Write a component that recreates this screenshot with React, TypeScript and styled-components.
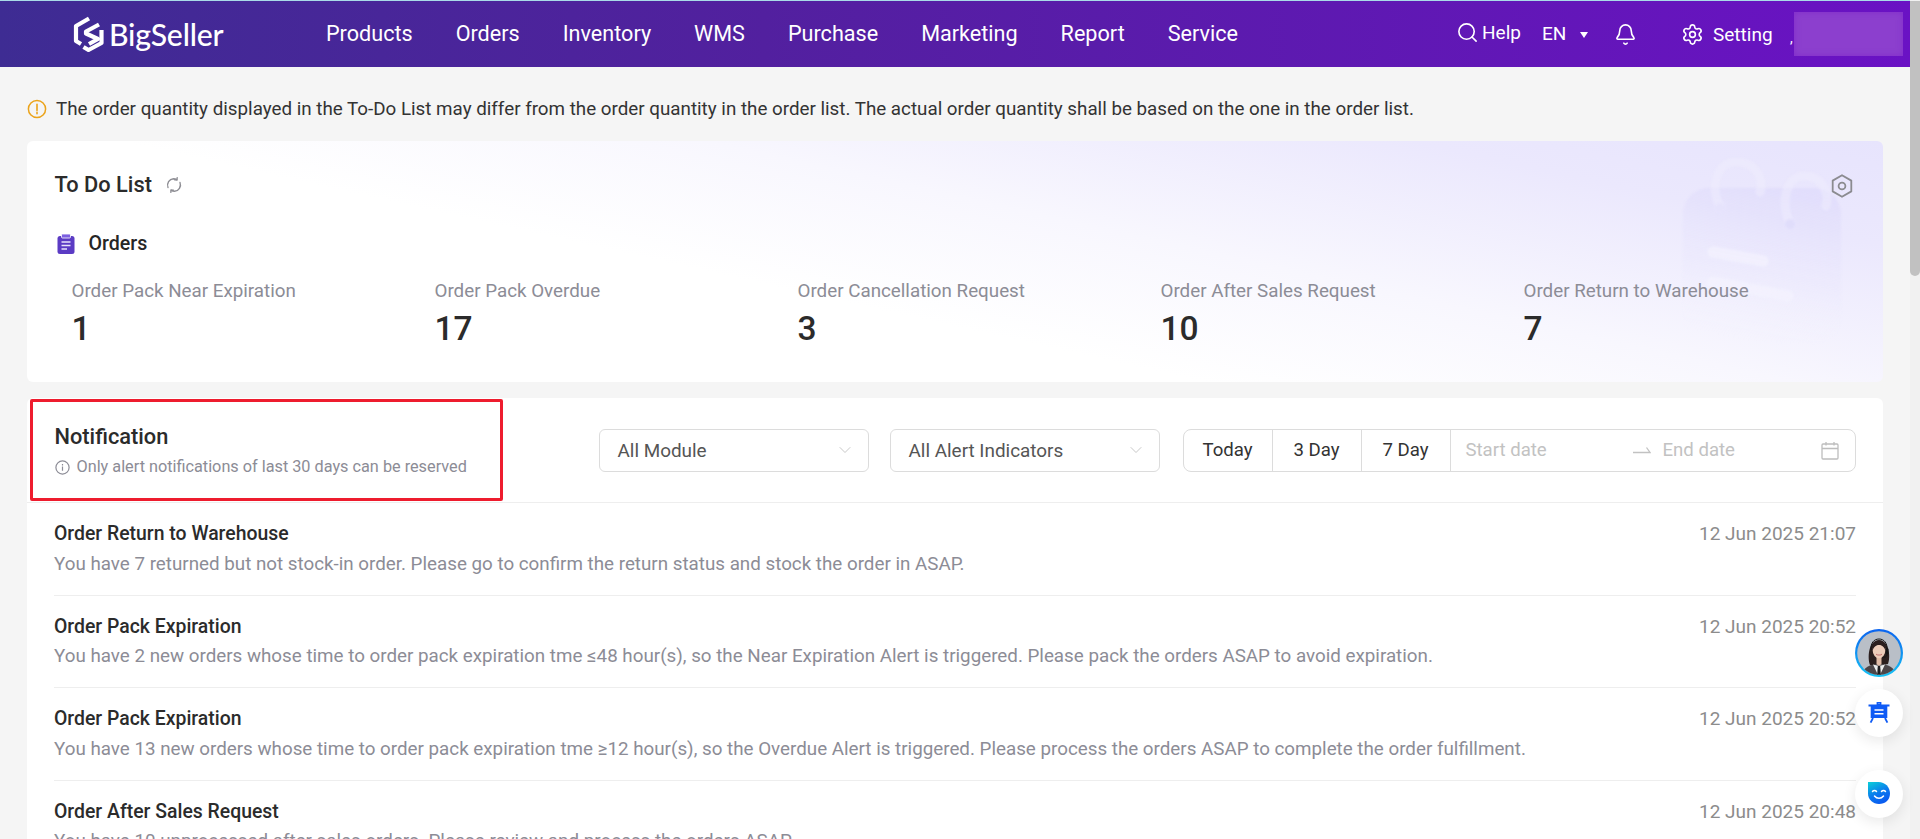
import React from "react";
import styled, { createGlobalStyle } from "styled-components";
import { Bell, ChevronDown, Search, Settings } from "lucide-react";

const Global = createGlobalStyle`
  html, body { margin: 0; padding: 0; background: #f5f5f5; }
  body { font-family: Roboto, "Liberation Sans", sans-serif; color: #262626; }
  * { box-sizing: border-box; }
`;

const Shell = styled.div`
  display: flex;
  height: 839px;
  overflow: hidden;
  position: relative;
`;
const Main = styled.div`
  flex: 1;
  min-width: 0;
`;
const ScrollTrack = styled.div`
  width: 10px;
  flex: none;
  background: #f1f1f1;
  padding-top: 1px;
`;
const ScrollThumb = styled.div`
  height: 275px;
  background: #c1c1c1;
  border-radius: 0 0 5px 5px;
`;

const Header = styled.header`
  height: 67px;
  border-top: 1px solid #a9dbe8;
  background: linear-gradient(90deg, #3e2c93 0%, #52209f 40%, #6a12c4 100%);
  display: flex;
  align-items: center;
  padding-left: 73px;
  color: #fff;
`;
const Logo = styled.div`
  width: 253px;
  flex: none;
  display: flex;
  align-items: center;
  gap: 5px;
`;
const LogoText = styled.span`
  font-family: Lato, Roboto, sans-serif;
  font-size: 30.2px;
  font-weight: 500;
  letter-spacing: -0.2px;
  line-height: 1;
`;
const Nav = styled.nav`
  display: flex;
  gap: 43px;
  margin-top: -1px;
`;
const NavItem = styled.span`
  font-size: 21.6px;
  line-height: 30px;
`;
const HeaderRight = styled.div`
  margin-left: auto;
  display: flex;
  align-items: center;
  font-size: 19px;
  height: 100%;
  padding-right: 7px;
`;
const HelpLink = styled.span`
  display: flex;
  align-items: center;
  gap: 3px;
  margin-top: -3px;
  width: 86px;
`;
const Lang = styled.span`
  display: flex;
  align-items: center;
  gap: 14px;
  width: 72px;
  margin-top: -1px;
`;
const Caret = styled.i`
  width: 0;
  height: 0;
  border-left: 4.5px solid transparent;
  border-right: 4.5px solid transparent;
  border-top: 6px solid #fff;
  margin-top: 3px;
`;
const BellWrap = styled.span`
  display: flex;
  width: 67px;
`;
const SettingLink = styled.span`
  display: flex;
  align-items: center;
  gap: 9px;
  width: 113px;
`;
const Comma = styled.span`
  width: 0;
  margin-top: 8px;
  font-size: 14px;
  position: relative;
  left: -4px;
`;
const BlurBox = styled.div`
  width: 109px;
  height: 44px;
  background: #8c3fce;
  box-shadow: inset 0 0 6px rgba(120, 30, 200, 0.55);
  filter: blur(0.6px);
`;

const Content = styled.main`
  padding: 0 27px;
`;
const Notice = styled.div`
  display: flex;
  align-items: center;
  padding: 31px 0 21px;
  font-size: 18.8px;
  line-height: 22px;
  gap: 9px;
  color: #333;
`;
const TodoCard = styled.section`
  position: relative;
  height: 241px;
  border-radius: 6px;
  padding: 32px 27.5px 0;
  overflow: hidden;
  background: linear-gradient(192.5deg, #e7e4fd 0%, #ebe8fd 16%, #f8f7fe 40%, #fff 60%);
`;
const Watermark = styled.svg`
  position: absolute;
  left: 1655px;
  top: 17px;
  filter: blur(1.2px);
`;
const GearBtn = styled.svg`
  position: absolute;
  right: 30px;
  top: 33px;
`;
const TitleRow = styled.div`
  display: flex;
  align-items: center;
  gap: 13px;
  position: relative;
`;
const CardTitle = styled.h2`
  margin: 0;
  font-size: 21.8px;
  line-height: 24px;
  font-weight: 500;
  color: #2b2b2b;
`;
const GroupRow = styled.div`
  display: flex;
  align-items: center;
  gap: 14px;
  margin-top: 35px;
  padding-left: 2px;
  position: relative;
`;
const GroupName = styled.span`
  font-size: 19.6px;
  font-weight: 500;
  line-height: 24px;
`;
const Stats = styled.div`
  display: grid;
  grid-template-columns: repeat(5, 363px);
  padding-left: 17px;
  margin-top: 23px;
  position: relative;
`;
const Stat = styled.div`
  display: flex;
  flex-direction: column;
`;
const StatLabel = styled.span`
  font-size: 18.8px;
  line-height: 24px;
  color: #8c8c96;
`;
const StatValue = styled.span`
  font-size: 33.5px;
  line-height: 40px;
  margin-top: 6px;
  font-weight: 500;
  color: #2b2b2b;
`;

const NotifyCard = styled.section`
  margin-top: 16px;
  background: #fff;
  border-radius: 6px 6px 0 0;
`;
const NotifyHeader = styled.div`
  position: relative;
  height: 105px;
  display: flex;
  align-items: center;
  padding: 0 27.5px;
  border-bottom: 1px solid #eeeeee;
`;
const Highlight = styled.div`
  position: absolute;
  left: 3px;
  top: 1px;
  width: 473px;
  height: 102px;
  border: 3.5px solid #ee1c2e;
  border-radius: 2px;
  pointer-events: none;
`;
const NotifyHeading = styled.div`
  display: flex;
  flex-direction: column;
  gap: 8px;
  margin-top: 2px;
`;
const Hint = styled.div`
  display: flex;
  align-items: center;
  gap: 7px;
  font-size: 16.25px;
  line-height: 20px;
  color: #8c8c96;
`;
const Filters = styled.div`
  margin-left: auto;
  display: flex;
  align-items: center;
`;
const SelectBox = styled.div`
  width: 270px;
  height: 43px;
  border: 1px solid #dcdcdc;
  border-radius: 6px;
  display: flex;
  align-items: center;
  justify-content: space-between;
  padding: 0 13px 0 18px;
  margin-right: 21px;
  font-size: 18.9px;
  color: #555;
  & + & {
    margin-right: 23px;
  }
`;
const DateGroup = styled.div`
  width: 673px;
  height: 43px;
  border: 1px solid #dcdcdc;
  border-radius: 8px;
  display: flex;
  align-items: center;
`;
const RangeBtn = styled.span`
  width: 89px;
  height: 100%;
  flex: none;
  display: flex;
  align-items: center;
  justify-content: center;
  font-size: 18.6px;
  color: #333;
  border-right: 1px solid #dcdcdc;
`;
const DateInputs = styled.div`
  flex: 1;
  display: flex;
  align-items: center;
  padding: 0 16px 0 15px;
  font-size: 18.6px;
  color: #c2c2c2;
`;
const DatePlaceholder = styled.span<{ $w: number }>`
  width: ${(p) => p.$w}px;
`;
const ArrowWrap = styled.span`
  width: 30px;
  display: flex;
`;
const RowList = styled.div`
  padding: 0 27px;
`;
const Row = styled.article`
  height: 92.5px;
  padding-top: 19px;
  border-bottom: 1px solid #eeeeee;
`;
const RowTop = styled.div`
  display: flex;
  justify-content: space-between;
`;
const RowTitle = styled.span`
  font-size: 19.4px;
  line-height: 24px;
  font-weight: 500;
  color: #2b2b2b;
`;
const RowTime = styled.span`
  font-size: 19px;
  line-height: 24px;
  color: #8c8c8c;
`;
const RowDesc = styled.p`
  margin: 5.5px 0 0;
  font-size: 18.8px;
  line-height: 24px;
  color: #8c8c96;
`;

const FloatStack = styled.div`
  position: absolute;
  left: 1855px;
  top: 629px;
  display: flex;
  flex-direction: column;
`;
const FloatBtn = styled.div<{ $gap: number }>`
  width: 48px;
  height: 48px;
  border-radius: 50%;
  background: #fff;
  box-shadow: 0 4px 14px rgba(0, 0, 0, 0.09);
  display: flex;
  align-items: center;
  justify-content: center;
  margin-top: ${(p) => p.$gap}px;
`;

const stats = [
  ["Order Pack Near Expiration", "1"],
  ["Order Pack Overdue", "17"],
  ["Order Cancellation Request", "3"],
  ["Order After Sales Request", "10"],
  ["Order Return to Warehouse", "7"],
];

const rows = [
  ["Order Return to Warehouse", "12 Jun 2025 21:07", "You have 7 returned but not stock-in order. Please go to confirm the return status and stock the order in ASAP."],
  ["Order Pack Expiration", "12 Jun 2025 20:52", "You have 2 new orders whose time to order pack expiration tme ≤48 hour(s), so the Near Expiration Alert is triggered. Please pack the orders ASAP to avoid expiration."],
  ["Order Pack Expiration", "12 Jun 2025 20:52", "You have 13 new orders whose time to order pack expiration tme ≥12 hour(s), so the Overdue Alert is triggered. Please process the orders ASAP to complete the order fulfillment."],
  ["Order After Sales Request", "12 Jun 2025 20:48", "You have 10 unprocessed after sales orders. Please review and process the orders ASAP."],
];

const nav = ["Products", "Orders", "Inventory", "WMS", "Purchase", "Marketing", "Report", "Service"];

const LogoMark = () => (
  <svg width="31" height="36" viewBox="0 0 31 36" fill="none" stroke="#fff" strokeWidth="4.2" strokeLinejoin="round">
    <path d="M16 2.500 3 10v15l5 3" />
    <path d="M26 8.500 13 15.500v2l12 5.500-9 5" />
    <path d="M28.500 14v13L15.500 34l-5-3" />
  </svg>
);

const WarnIcon = () => (
  <svg width="20" height="20" viewBox="0 0 20 20" fill="none">
    <circle cx="10" cy="10" r="8.600" stroke="#eba31a" strokeWidth="1.500" />
    <path d="M10 5.200v6.200M10 13.400v1.400" stroke="#eba31a" strokeWidth="1.600" strokeLinecap="round" />
  </svg>
);

const RefreshIcon = () => (
  <svg width="18" height="18" viewBox="0 0 18 18" fill="none" stroke="#8f8f95" strokeWidth="1.400" strokeLinecap="round">
    <path d="M3 11.500A6.500 6.500 0 0 1 8.500 2.700c1.400 0 2.400.4 3.300 1" />
    <path d="M15 6.500a6.500 6.500 0 0 1-5.500 8.800c-1.400 0-2.400-.4-3.300-1" />
    <path d="M12.200 1.600l-.3 2.400-2.300-.2M5.800 16.400l.3-2.400 2.300.2" />
  </svg>
);

const ClipIcon = () => (
  <svg width="18" height="20" viewBox="0 0 18 20">
    <rect x="0.500" y="2" width="17" height="18" rx="2.500" fill="#5b3bc4" />
    <rect x="4.500" y="0" width="9" height="4" rx="1" fill="#7c5fe0" stroke="#fff" strokeWidth="0.800" />
    <path d="M4.500 8h9M4.500 11.500h9M4.500 15h5.500" stroke="#e8e3fb" strokeWidth="1.500" />
  </svg>
);

const HexGear = () => (
  <GearBtn width="22" height="24" viewBox="0 0 22 24" fill="none" stroke="#8b8b90" strokeWidth="1.800">
    <path d="M11 1.200 20.300 6.600v10.800L11 22.800 1.700 17.400V6.600Z" strokeLinejoin="round" />
    <circle cx="11" cy="12" r="3.400" />
  </GearBtn>
);

const Calendar3D = () => (
  <Watermark width="160" height="186" viewBox="0 0 160 186">
    <defs>
      <linearGradient id="wm" x1="0.700" y1="0" x2="0.500" y2="1">
        <stop offset="0" stopColor="#dedafb" stopOpacity="0.700" />
        <stop offset="0.600" stopColor="#ebe9fd" stopOpacity="0.450" />
        <stop offset="1" stopColor="#f8f7ff" stopOpacity="0" />
      </linearGradient>
    </defs>
    <rect x="1" y="30" width="158" height="155" rx="26" fill="url(#wm)" />
    <path d="M38 48C28 30 34 4 54 4s28 17 24 30" fill="none" stroke="#f0eefd" strokeWidth="9" strokeLinecap="round" strokeOpacity="0.500" />
    <path d="M108 65C98 44 104 18 122 18s26 17 22 30" fill="none" stroke="#f0eefd" strokeWidth="9" strokeLinecap="round" strokeOpacity="0.500" />
    <circle cx="38" cy="50" r="5" fill="#e6e3fc" />
    <circle cx="108" cy="66" r="5" fill="#e0ddfb" />
    <path d="M31 94l50 9M31 124l75 14" stroke="#f4f2fe" strokeWidth="11" strokeLinecap="round" strokeOpacity="0.700" />
  </Watermark>
);

const InfoIcon = () => (
  <svg width="15" height="15" viewBox="0 0 15 15" fill="none" stroke="#8c8c96" strokeWidth="1.200">
    <circle cx="7.500" cy="7.500" r="6.600" />
    <path d="M7.500 6.600v4.200M7.500 4v1.400" />
  </svg>
);

const ThinArrow = () => (
  <svg width="18" height="8" viewBox="0 0 18 8" fill="none" stroke="#c2c2c2" strokeWidth="1.300">
    <path d="M0 6.500h17L13.500 1.500" />
  </svg>
);

const CalIcon = () => (
  <svg width="18" height="19" viewBox="0 0 18 19" fill="none" stroke="#bdbdbd" strokeWidth="1.300">
    <rect x="1" y="3" width="16" height="15" rx="1" />
    <path d="M1 7.500h16M5 1v3.500M13 1v3.500" />
  </svg>
);

const AvatarArt = () => (
  <svg width="48" height="48" viewBox="0 0 48 48">
    <defs>
      <linearGradient id="ring" x1="0" y1="0" x2="0" y2="1">
        <stop offset="0" stopColor="#0b63ef" />
        <stop offset="1" stopColor="#16c3f5" />
      </linearGradient>
      <clipPath id="face">
        <circle cx="24" cy="24" r="21.800" />
      </clipPath>
    </defs>
    <circle cx="24" cy="24" r="24" fill="url(#ring)" />
    <g clipPath="url(#face)">
      <rect width="48" height="48" fill="#b9bfc7" />
      <path d="M15 36c-2.500-7-2-24 9-25 11 1 11.500 18 9 24l-5 1-4-2-5 3z" fill="#2b1f1e" />
      <path d="M7 48c0-9 7-13 17-13s17 4 17 13z" fill="#4b4649" />
      <path d="M18 35.500l6 12.500 6-12.500-6 1.500z" fill="#eceded" />
      <path d="M22.800 37h2.400l.8 11h-4z" fill="#1e1e20" />
      <path d="M21.500 27h5v8l-2.500 2-2.500-2z" fill="#e0bba6" />
      <ellipse cx="24" cy="21.500" rx="6.300" ry="7.800" fill="#ecccb9" />
      <path d="M17.500 22c-.3-6.500 3-9.500 6.500-9.500s6.800 3 6.500 9.500c-1-3.500-3-6-6.500-6s-5.500 2.500-6.500 6z" fill="#2b1f1e" />
      <path d="M21 25.300c2 1.600 4 1.600 6 0-1 .4-5 .4-6 0z" fill="#fff" stroke="#b5544f" strokeWidth="0.500" />
      <path d="M16 21c-.6-7 3-11 8-11s8.600 4 8 11" fill="none" stroke="#151516" strokeWidth="1" />
      <rect x="30.800" y="19" width="2.600" height="6.500" rx="1.300" fill="#151516" />
      <path d="M32 25.500c0 2.500-2 2.800-4.500 2.800" stroke="#151516" strokeWidth="0.800" fill="none" />
    </g>
  </svg>
);

const BoardIcon = () => (
  <svg width="22" height="22" viewBox="0 0 22 22" fill="none">
    <path d="M0.500 2.600h21v2h-2.200v11.400H2.700V4.600H0.500z" fill="#0f5bf5" />
    <path d="M9.500 0.600h3v2.400h-3zM5 16l-2.400 4.600M17 16l2.400 4.600" stroke="#0f5bf5" strokeWidth="1.800" />
    <path d="M6.500 8h9M6.500 11.800h9" stroke="#fff" strokeWidth="1.500" />
  </svg>
);

const SmileIcon = () => (
  <svg width="22" height="24" viewBox="0 0 22 24" fill="none">
    <defs>
      <linearGradient id="sm" x1="0" y1="0" x2="0.500" y2="1">
        <stop offset="0" stopColor="#0bd0d8" />
        <stop offset="0.600" stopColor="#0a79ee" />
        <stop offset="1" stopColor="#0a5cf0" />
      </linearGradient>
    </defs>
    <path d="M0 0h10.500C17 0 22 5 22 11.500S17 22 11 22 0 17.500 0 11.500z" fill="url(#sm)" />
    <path d="M4.500 9.500c1-1.500 3-1.500 4 0M13.500 9.500c1-1.500 3-1.500 4 0M6.500 14c2.500 3 6.500 3 9 0" stroke="#fff" strokeWidth="1.500" strokeLinecap="round" />
  </svg>
);

export default function App() {
  return (
    <>
      <Global />
      <Shell>
        <Main>
          <Header>
            <Logo>
              <LogoMark />
              <LogoText>BigSeller</LogoText>
            </Logo>
            <Nav>
              {nav.map((n) => (
                <NavItem key={n}>{n}</NavItem>
              ))}
            </Nav>
            <HeaderRight>
              <HelpLink>
                <Search size={23} strokeWidth={1.7} />
                Help
              </HelpLink>
              <Lang>
                EN
                <Caret />
              </Lang>
              <BellWrap>
                <Bell size={23} strokeWidth={1.7} />
              </BellWrap>
              <SettingLink>
                <Settings size={23} strokeWidth={1.7} />
                Setting
              </SettingLink>
              <Comma>,</Comma>
              <BlurBox />
            </HeaderRight>
          </Header>
          <Content>
            <Notice>
              <WarnIcon />
              The order quantity displayed in the To-Do List may differ from the order quantity in the order list. The actual order quantity shall be based on the one in the order list.
            </Notice>
            <TodoCard>
              <Calendar3D />
              <HexGear />
              <TitleRow>
                <CardTitle>To Do List</CardTitle>
                <RefreshIcon />
              </TitleRow>
              <GroupRow>
                <ClipIcon />
                <GroupName>Orders</GroupName>
              </GroupRow>
              <Stats>
                {stats.map(([l, v]) => (
                  <Stat key={l}>
                    <StatLabel>{l}</StatLabel>
                    <StatValue>{v}</StatValue>
                  </Stat>
                ))}
              </Stats>
            </TodoCard>
            <NotifyCard>
              <NotifyHeader>
                <Highlight />
                <NotifyHeading>
                  <CardTitle>Notification</CardTitle>
                  <Hint>
                    <InfoIcon />
                    Only alert notifications of last 30 days can be reserved
                  </Hint>
                </NotifyHeading>
                <Filters>
                  <SelectBox>
                    All Module
                    <ChevronDown size={20} strokeWidth={1} color="#bdbdbd" />
                  </SelectBox>
                  <SelectBox>
                    All Alert Indicators
                    <ChevronDown size={20} strokeWidth={1} color="#bdbdbd" />
                  </SelectBox>
                  <DateGroup>
                    <RangeBtn>Today</RangeBtn>
                    <RangeBtn>3 Day</RangeBtn>
                    <RangeBtn>7 Day</RangeBtn>
                    <DateInputs>
                      <DatePlaceholder $w={167}>Start date</DatePlaceholder>
                      <ArrowWrap>
                        <ThinArrow />
                      </ArrowWrap>
                      <DatePlaceholder $w={158}>End date</DatePlaceholder>
                      <CalIcon />
                    </DateInputs>
                  </DateGroup>
                </Filters>
              </NotifyHeader>
              <RowList>
                {rows.map(([t, d, m], i) => (
                  <Row key={i}>
                    <RowTop>
                      <RowTitle>{t}</RowTitle>
                      <RowTime>{d}</RowTime>
                    </RowTop>
                    <RowDesc>{m}</RowDesc>
                  </Row>
                ))}
              </RowList>
            </NotifyCard>
          </Content>
        </Main>
        <ScrollTrack>
          <ScrollThumb />
        </ScrollTrack>
        <FloatStack>
          <AvatarArt />
          <FloatBtn $gap={12}>
            <BoardIcon />
          </FloatBtn>
          <FloatBtn $gap={33}>
            <SmileIcon />
          </FloatBtn>
        </FloatStack>
      </Shell>
    </>
  );
}
